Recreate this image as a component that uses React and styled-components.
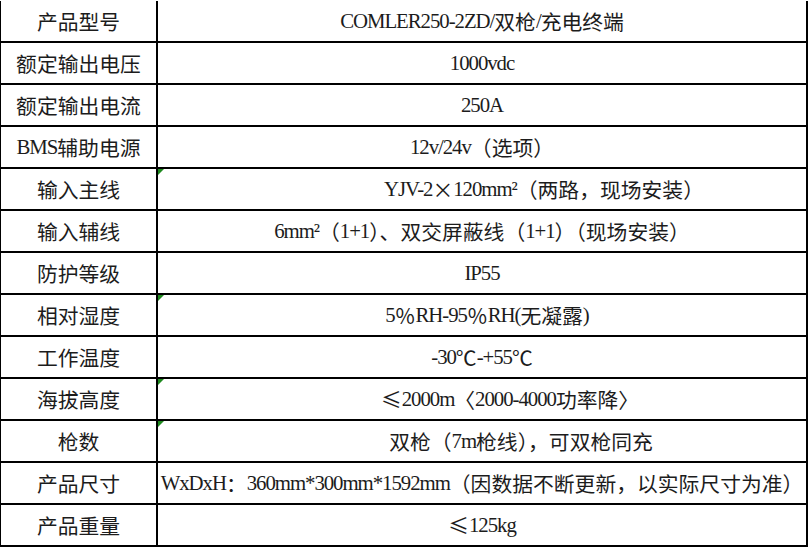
import React from "react";
import styled, { createGlobalStyle } from "styled-components";

const GlobalStyle = createGlobalStyle`
  html, body {
    margin: 0;
    padding: 0;
    background: #fff;
    overflow: hidden;
  }
`;

const specs = [
  { label: "产品型号", value: "COMLER250-2ZD/双枪/充电终端" },
  { label: "额定输出电压", value: "1000vdc" },
  { label: "额定输出电流", value: "250A" },
  { label: "BMS辅助电源", value: "12v/24v（选项）" },
  { label: "输入主线", value: "YJV-2×120mm²（两路，现场安装）", shift: 124, flag: true },
  { label: "输入辅线", value: "6mm²（1+1）、双交屏蔽线（1+1）（现场安装）" },
  { label: "防护等级", value: "IP55" },
  { label: "相对湿度", value: "5％RH-95％RH(无凝露)", shift: 10, flag: true },
  { label: "工作温度", value: "-30℃-+55℃" },
  { label: "海拔高度", value: "≤2000m〈2000-4000功率降〉", shift: 56, flag: true },
  { label: "枪数", value: "双枪（7m枪线），可双枪同充", shift: 78, flag: true },
  { label: "产品尺寸", value: "WxDxH：360mm*300mm*1592mm（因数据不断更新，以实际尺寸为准）" },
  { label: "产品重量", value: "≤125kg" },
];

const Sheet = styled.div`
  display: grid;
  grid-template-columns: 157px 650px;
  grid-auto-rows: 42px;
  width: fit-content;
  margin: 1px 0 0 -1px;
  border-left: 2px solid #000;
  font-family: "Noto Sans CJK SC", sans-serif;
  font-size: 20.8px;
  color: #1c1c1c;
`;

const Cell = styled.div`
  position: relative;
  box-sizing: border-box;
  display: flex;
  align-items: center;
  justify-content: center;
  white-space: nowrap;
  border-right: 2px solid #000;
  border-bottom: 2px solid #000;
  line-height: 1;
`;

const Label = styled(Cell)``;

const Value = styled(Cell)`
  padding-left: ${(p) => p.$shift || 0}px;

  &::before {
    content: "";
    display: ${(p) => (p.$flag ? "block" : "none")};
    position: absolute;
    top: 0;
    left: 0;
    width: 0;
    height: 0;
    border-top: 6px solid #1f8a1f;
    border-right: 6px solid transparent;
  }
`;

// latin runs: narrow serif, close to the half-width latin of a song typeface
const Latin = styled.span`
  font-family: "Liberation Serif", serif;
  font-size: 1em;
  letter-spacing: -0.05em;
`;

function Mixed({ text }) {
  const parts = text.split(/([!-~²]+)/);
  return parts.map((part, i) =>
    i % 2 === 1 ? <Latin key={i}>{part}</Latin> : part
  );
}

export default function App() {
  return (
    <>
      <GlobalStyle />
      <Sheet>
        {specs.map((row) => (
          <React.Fragment key={row.label}>
            <Label>
              <Mixed text={row.label} />
            </Label>
            <Value $shift={row.shift} $flag={row.flag}>
              <Mixed text={row.value} />
            </Value>
          </React.Fragment>
        ))}
      </Sheet>
    </>
  );
}
